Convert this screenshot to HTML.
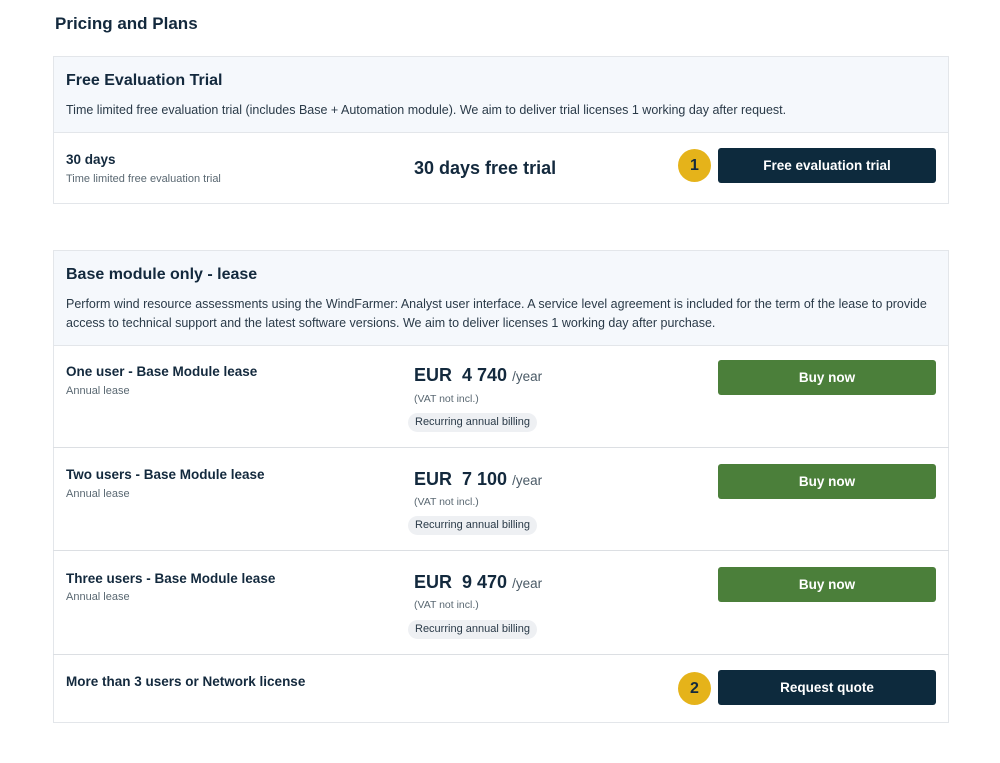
<!DOCTYPE html>
<html><head><style>
*{margin:0;padding:0;box-sizing:border-box}
body{width:1000px;height:763px;background:#fff;font-family:"Liberation Sans",sans-serif;color:#13293d;position:relative;overflow:hidden}
.a{position:absolute;white-space:nowrap}
.card{position:absolute;left:53px;width:896px;border:1px solid #e3e6ea}
.hd{position:absolute;left:0;right:0;top:0;background:#f5f8fc;border-bottom:1px solid #e3e6ea}
.line{position:absolute;left:53px;width:896px;height:1px;background:#dcdfe3}
h1{font-size:17px;font-weight:bold}
.t{font-size:16px;font-weight:bold}
.d{font-size:12.5px;color:#2a3a48;line-height:19px}
.rt{font-size:13.5px;font-weight:bold}
.rs{font-size:11px;color:#5a6872}
.btn{position:absolute;left:718px;width:218px;height:35px;border-radius:3px;color:#fff;font-weight:bold;font-size:13.5px;text-align:center;line-height:35px}
.dk{background:#0d2a3d}.gr{background:#4b7f3a}
.pr{font-size:18px;font-weight:bold}
.pr span{font-size:13.5px;font-weight:normal;color:#4a5a66}
.vat{font-size:10.5px;color:#5a6872}
.pill{position:absolute;left:408px;height:19px;padding:0 7px;background:#eef0f3;border-radius:10px;font-size:11px;line-height:19px;color:#2a3a48}
.bd{position:absolute;width:33px;height:33px;border-radius:50%;background:#e5b31a;color:#13293d;font-weight:bold;font-size:16px;text-align:center;line-height:33px}
</style></head><body>
<h1 class="a" style="left:55px;top:14px">Pricing and Plans</h1>

<div class="card" style="top:56px;height:148px"><div class="hd" style="height:76px"></div></div>
<div class="a t" style="left:66px;top:72px">Free Evaluation Trial</div>
<div class="a d" style="left:66px;top:101px">Time limited free evaluation trial (includes Base + Automation module). We aim to deliver trial licenses 1 working day after request.</div>
<div class="a rt" style="left:66px;top:152px">30 days</div>
<div class="a rs" style="left:66px;top:173px">Time limited free evaluation trial</div>
<div class="a" style="left:414px;top:158px;font-size:18px;font-weight:bold">30 days free trial</div>
<div class="bd" style="left:678px;top:149px">1</div>
<div class="btn dk" style="top:148px">Free evaluation trial</div>

<div class="card" style="top:250px;height:473px"><div class="hd" style="height:95px"></div></div>
<div class="a t" style="left:66px;top:266px">Base module only - lease</div>
<div class="a d" style="left:66px;top:295px">Perform wind resource assessments using the WindFarmer: Analyst user interface. A service level agreement is included for the term of the lease to provide<br>access to technical support and the latest software versions. We aim to deliver licenses 1 working day after purchase.</div>

<div class="a rt" style="left:66px;top:364px">One user - Base Module lease</div>
<div class="a rs" style="left:66px;top:385px">Annual lease</div>
<div class="a pr" style="left:414px;top:365px">EUR&nbsp; 4 740 <span>/year</span></div>
<div class="a vat" style="left:414px;top:393px">(VAT not incl.)</div>
<div class="pill" style="top:413px">Recurring annual billing</div>
<div class="btn gr" style="top:360px">Buy now</div>
<div class="line" style="top:447px"></div>

<div class="a rt" style="left:66px;top:467px">Two users - Base Module lease</div>
<div class="a rs" style="left:66px;top:488px">Annual lease</div>
<div class="a pr" style="left:414px;top:469px">EUR&nbsp; 7 100 <span>/year</span></div>
<div class="a vat" style="left:414px;top:496px">(VAT not incl.)</div>
<div class="pill" style="top:516px">Recurring annual billing</div>
<div class="btn gr" style="top:464px">Buy now</div>
<div class="line" style="top:550px"></div>

<div class="a rt" style="left:66px;top:571px">Three users - Base Module lease</div>
<div class="a rs" style="left:66px;top:591px">Annual lease</div>
<div class="a pr" style="left:414px;top:572px">EUR&nbsp; 9 470 <span>/year</span></div>
<div class="a vat" style="left:414px;top:599px">(VAT not incl.)</div>
<div class="pill" style="top:620px">Recurring annual billing</div>
<div class="btn gr" style="top:567px">Buy now</div>
<div class="line" style="top:654px"></div>

<div class="a rt" style="left:66px;top:674px">More than 3 users or Network license</div>
<div class="bd" style="left:678px;top:672px">2</div>
<div class="btn dk" style="top:670px">Request quote</div>
</body></html>
